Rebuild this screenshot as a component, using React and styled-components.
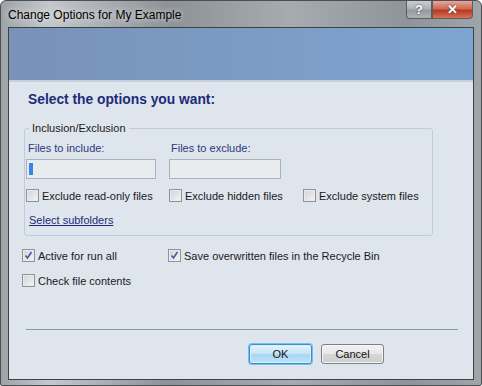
import React from "react";
import styled, { createGlobalStyle } from "styled-components";

const Global = createGlobalStyle`
  html, body {
    margin: 0;
    padding: 0;
    background: #ffffff;
  }
  * {
    box-sizing: border-box;
  }
`;

const Window = styled.div`
  width: 482px;
  height: 386px;
  display: flex;
  flex-direction: column;
  border: 1px solid #4a4f55;
  border-radius: 6px 6px 2px 2px;
  background: linear-gradient(
    90deg,
    #9ea3a8 0%,
    #c4c8cc 10%,
    #8d9296 35%,
    #a6abb0 60%,
    #8f9499 85%,
    #a0a5aa 100%
  );
  font-family: "Liberation Sans", Arial, sans-serif;
  font-size: 11px;
  color: #1a1a1a;
  overflow: hidden;
`;

const TitleBar = styled.div`
  height: 26px;
  display: flex;
  align-items: flex-start;
  padding: 0 7px;
`;

const Title = styled.div`
  margin-top: 7px;
  font-size: 12px;
  color: #000;
  text-shadow: 0 0 6px rgba(255, 255, 255, 0.9);
`;

const CaptionButtons = styled.div`
  margin-left: auto;
  display: flex;
  margin-right: 1px;
`;

const CaptionButton = styled.div`
  width: ${(p) => (p.wide ? "41px" : "26px")};
  height: 18px;
  display: flex;
  align-items: center;
  justify-content: center;
  border: 1px solid #5b5f64;
  border-top: none;
  border-radius: ${(p) => (p.wide ? "0 0 4px 0" : "0 0 0 4px")};
  background: ${(p) =>
    p.wide
      ? "linear-gradient(180deg, #e6a89a 0%, #cf6a56 45%, #b83a22 55%, #d8705a 100%)"
      : "linear-gradient(180deg, #c9cdd1 0%, #aeb3b8 45%, #959a9f 55%, #adb2b6 100%)"};
  color: #fff;
  font-weight: bold;
  font-size: 13px;
  text-shadow: 0 0 2px #333;
`;

const Client = styled.div`
  flex: 1;
  margin: 0 7px 5px 7px;
  display: flex;
  flex-direction: column;
  border: 1px solid #3d4248;
  background: #dee5ed;
`;

const Banner = styled.div`
  height: 54px;
  background: linear-gradient(90deg, #7892b8 0%, #7b9bc4 50%, #7ea5d0 100%);
  border-bottom: 2px solid #c5d0dc;
`;

const Body = styled.div`
  flex: 1;
  display: flex;
  flex-direction: column;
  padding: 10px 15px 0 12px;
`;

const Heading = styled.h1`
  margin: 0 0 0 7px;
  font-size: 13.8px;
  font-weight: bold;
  color: #1d2c78;
`;

const Group = styled.fieldset`
  margin: 15px 25px 0 3px;
  padding: 8px 0 9px 1px;
  border: 1px solid #c3ccd6;
  border-radius: 3px;
`;

const Legend = styled.legend`
  margin-left: 3px;
  padding: 0 3px;
  font-size: 11px;
  color: #1a1a1a;
`;

const FieldGrid = styled.div`
  display: grid;
  grid-template-columns: 143px 134px 1fr;
`;

const FieldLabel = styled.div`
  padding-left: 2px;
  height: 17px;
  color: #2b3a7c;
`;

const TextBox = styled.div`
  width: ${(p) => p.width}px;
  height: 20px;
  display: flex;
  align-items: center;
  padding-left: 2px;
  border: 1px solid #aab2bb;
  background: #e9ecef;
`;

const Caret = styled.span`
  width: 4px;
  height: 12px;
  background: #3a86e6;
`;

const CheckRow = styled.div`
  display: flex;
  align-items: center;
  gap: 3px;
  margin-top: ${(p) => p.top || 0}px;
`;

const Box = styled.span`
  width: 13px;
  height: 13px;
  display: flex;
  align-items: center;
  justify-content: center;
  border: 1px solid #8f9498;
  background: linear-gradient(135deg, #cfd4d8 0%, #f4f5f6 100%);
  box-shadow: inset 0 0 0 1px #e8eaec;
`;

const Link = styled.a`
  display: inline-block;
  margin: 12px 0 0 3px;
  color: #1d2c78;
  text-decoration: underline;
  cursor: pointer;
`;

const Options = styled.div`
  display: grid;
  grid-template-columns: 146px 1fr;
  row-gap: 12px;
  margin: 13px 0 0 1px;
`;

const Separator = styled.hr`
  margin: auto 0 0 5px;
  border: none;
  border-top: 1px solid #8b98b0;
`;

const Footer = styled.div`
  display: flex;
  justify-content: flex-end;
  gap: 9px;
  padding: 14px 74px 15px 0;
`;

const Button = styled.button`
  width: 63px;
  height: 20px;
  padding: 0;
  font-family: inherit;
  font-size: 11px;
  color: #111;
  border: 1px solid ${(p) => (p.primary ? "#3c8fc4" : "#7c7f83")};
  border-radius: 3px;
  background: ${(p) =>
    p.primary
      ? "linear-gradient(180deg, #e6f4fc 0%, #c3e4f7 50%, #a8d7f2 51%, #bde2f6 100%)"
      : "linear-gradient(180deg, #f2f2f2 0%, #e8e8e8 50%, #d6d6d6 51%, #cfcfcf 100%)"};
  box-shadow: ${(p) =>
    p.primary ? "0 0 0 1px #6fc2ee, inset 0 0 0 1px #d8effb" : "inset 0 0 0 1px #f6f6f6"};
`;

const Check = ({ checked }) => (
  <Box>
    {checked && (
      <svg width="9" height="9" viewBox="0 0 9 9">
        <path d="M1.5 4.5 L3.5 7 L7.5 1" fill="none" stroke="#4b55a6" strokeWidth="1.6" />
      </svg>
    )}
  </Box>
);

const CheckItem = ({ checked, label, top }) => (
  <CheckRow top={top}>
    <Check checked={checked} />
    <span>{label}</span>
  </CheckRow>
);

export default function App() {
  return (
    <>
      <Global />
      <Window>
        <TitleBar>
          <Title>Change Options for My Example</Title>
          <CaptionButtons>
            <CaptionButton>?</CaptionButton>
            <CaptionButton wide>✕</CaptionButton>
          </CaptionButtons>
        </TitleBar>
        <Client>
          <Banner />
          <Body>
            <Heading>Select the options you want:</Heading>
            <Group>
              <Legend>Inclusion/Exclusion</Legend>
              <FieldGrid>
                <FieldLabel>Files to include:</FieldLabel>
                <FieldLabel>Files to exclude:</FieldLabel>
                <div />
                <TextBox width={130}>
                  <Caret />
                </TextBox>
                <TextBox width={112} />
                <div />
                <CheckItem top={10} label="Exclude read-only files" />
                <CheckItem top={10} label="Exclude hidden files" />
                <CheckItem top={10} label="Exclude system files" />
              </FieldGrid>
              <Link>Select subfolders</Link>
            </Group>
            <Options>
              <CheckItem checked label="Active for run all" />
              <CheckItem checked label="Save overwritten files in the Recycle Bin" />
              <CheckItem label="Check file contents" />
            </Options>
            <Separator />
            <Footer>
              <Button primary>OK</Button>
              <Button>Cancel</Button>
            </Footer>
          </Body>
        </Client>
      </Window>
    </>
  );
}
